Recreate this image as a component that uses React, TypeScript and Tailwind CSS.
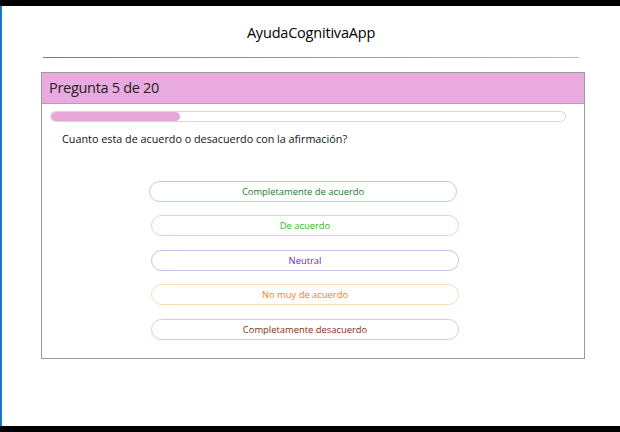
import React from "react";

const options = [
  { label: "Completamente de acuerdo", border: "border-[#b3d6b8]", text: "text-[#17802c]", ml: "ml-[107px]" },
  { label: "De acuerdo", border: "border-[#bfe8b8]", text: "text-[#2fbb22]", ml: "ml-[109px]" },
  { label: "Neutral", border: "border-[#c9bdea]", text: "text-[#6a2cc0]", ml: "ml-[109px]" },
  { label: "No muy de acuerdo", border: "border-[#fbd9b4]", text: "text-[#f57f14]", ml: "ml-[109px]" },
  { label: "Completamente desacuerdo", border: "border-[#e3cbbf]", text: "text-[#7e300c]", ml: "ml-[109px]" },
];

export default function App() {
  return (
    <div
      className="w-[620px] h-[432px] bg-white flex flex-col overflow-hidden"
      style={{ fontFamily: '"Open Sans", "Noto Sans", sans-serif' }}
    >
      <div className="h-[6px] bg-black shrink-0" />
      <div className="flex-1 flex">
        <div className="w-[2px] bg-[#1a74c8] shrink-0" />
        <div className="flex-1 flex flex-col">
          <div className="h-[51px] flex items-end justify-center pb-[17px]">
            <span className="text-[14.5px] leading-none text-black tracking-[-0.2px]">AyudaCognitivaApp</span>
          </div>
          <div className="ml-[41px] w-[536px] h-[1px] bg-gradient-to-r from-[#7a7a7a] to-[#b8b8b8]" />
          <div className="ml-[39px] mt-[14px] w-[544px] h-[287px] border border-[#9a9a9a] flex flex-col">
            <div className="h-[31px] bg-[#e9aadf] border-b border-[#c892bf] flex items-center pl-[7px]">
              <span className="text-[14.5px] text-[#222] leading-none tracking-[-0.3px]">Pregunta 5 de 20</span>
            </div>
            <div className="ml-[8px] mt-[7px] w-[516px] h-[11px] rounded-full border border-[#d6d6d6] bg-white overflow-hidden">
              <div className="h-full w-[25%] bg-[#e6a6d8] rounded-full" />
            </div>
            <div className="ml-[20px] mt-[12px] text-[10.8px] leading-none text-[#111]">
              Cuanto esta de acuerdo o desacuerdo con la afirmación?
            </div>
            <div className="mt-[36px] flex flex-col gap-[13.5px]">
              {options.map((o) => (
                <div
                  key={o.label}
                  className={`${o.ml} w-[308px] h-[21px] rounded-full border ${o.border} ${o.text} flex items-center justify-center text-[9.4px] leading-none`}
                >
                  {o.label}
                </div>
              ))}
            </div>
          </div>
        </div>
      </div>
      <div className="h-[6px] bg-black shrink-0" />
    </div>
  );
}
